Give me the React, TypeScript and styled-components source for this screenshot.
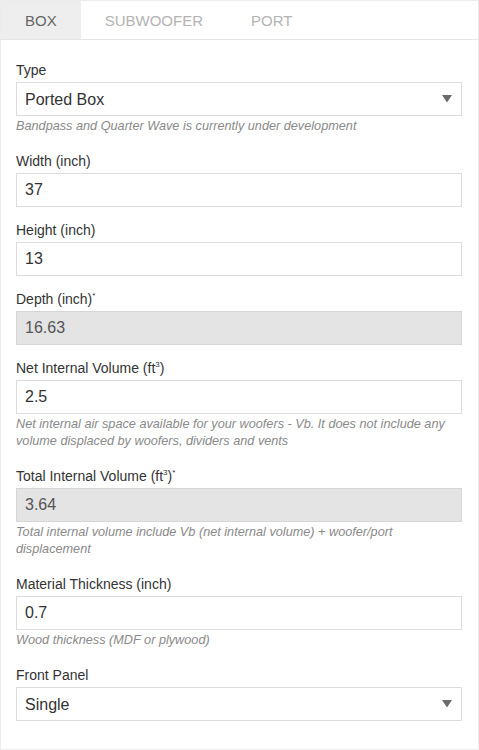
import React from "react";
import styled, { createGlobalStyle } from "styled-components";

const Global = createGlobalStyle`
  html, body { margin: 0; padding: 0; background: #ffffff; }
  body { font-family: "Liberation Sans", Arial, Helvetica, sans-serif; color: #333; }
  * { box-sizing: border-box; }
`;

const Card = styled.div`
  width: 479px;
  border: 1px solid #ececec;
  background: #fff;
`;

const TabBar = styled.div`
  display: flex;
  height: 39px;
  border-bottom: 1px solid #e6e6e6;
`;

const Tab = styled.div<{ $active?: boolean }>`
  display: flex;
  align-items: center;
  padding: 0 24px;
  font-size: 15px;
  color: ${(p) => (p.$active ? "#666666" : "#b3b3b3")};
  background: ${(p) => (p.$active ? "#eeeeee" : "transparent")};
`;

const Form = styled.div`
  display: flex;
  flex-direction: column;
  gap: 14px;
  padding: 21px 16px 28px 15px;
`;

const Group = styled.div`
  display: flex;
  flex-direction: column;
`;

const Label = styled.label`
  font-size: 14px;
  line-height: 18px;
  color: #333;
  margin-bottom: 3px;
`;

const Sup = styled.sup`
  font-size: 8px;
  line-height: 0;
  vertical-align: 6px;
`;

const Input = styled.input<{ $disabled?: boolean }>`
  width: 100%;
  height: 34px;
  margin: 0;
  padding: 0 8px;
  font-family: "Liberation Sans", Arial, Helvetica, sans-serif;
  font-size: 16px;
  color: ${(p) => (p.$disabled ? "#555" : "#333")};
  background: ${(p) => (p.$disabled ? "#e4e4e4" : "#fff")};
  border: 1px solid ${(p) => (p.$disabled ? "#d6d6d6" : "#dcdcdc")};
  border-radius: 0;
  outline: none;
`;

const SelectWrap = styled.div`
  position: relative;
  width: 100%;
`;

const Select = styled.select`
  width: 100%;
  height: 34px;
  margin: 0;
  padding: 0 30px 0 8px;
  font-family: "Liberation Sans", Arial, Helvetica, sans-serif;
  font-size: 16px;
  color: #333;
  background: #fff;
  border: 1px solid #dcdcdc;
  border-radius: 0;
  appearance: none;
  -webkit-appearance: none;
  outline: none;
`;

const Arrow = styled.svg`
  position: absolute;
  right: 10px;
  top: 13px;
  pointer-events: none;
`;

const Help = styled.div`
  margin: 2px 0 3px;
  font-size: 12.7px;
  line-height: 17px;
  font-style: italic;
  color: #8a8a8a;
`;

type FieldProps = {
  label: React.ReactNode;
  value: string;
  disabled?: boolean;
  help?: string;
};

const Field = ({ label, value, disabled, help }: FieldProps) => (
  <Group>
    <Label>{label}</Label>
    <Input defaultValue={value} readOnly={disabled} $disabled={disabled} />
    {help && <Help>{help}</Help>}
  </Group>
);

type SelectFieldProps = {
  label: string;
  options: string[];
  help?: string;
};

const SelectField = ({ label, options, help }: SelectFieldProps) => (
  <Group>
    <Label>{label}</Label>
    <SelectWrap>
      <Select defaultValue={options[0]}>
        {options.map((o) => (
          <option key={o}>{o}</option>
        ))}
      </Select>
      <Arrow width="10" height="8" viewBox="0 0 10 8">
        <polygon points="0,0 10,0 5,7.5" fill="#6b6b6b" />
      </Arrow>
    </SelectWrap>
    {help && <Help>{help}</Help>}
  </Group>
);

export default function App() {
  return (
    <>
      <Global />
      <Card>
        <TabBar>
          <Tab $active>BOX</Tab>
          <Tab>SUBWOOFER</Tab>
          <Tab>PORT</Tab>
        </TabBar>
        <Form>
          <SelectField
            label="Type"
            options={["Ported Box", "Sealed Box"]}
            help="Bandpass and Quarter Wave is currently under development"
          />
          <Field label="Width (inch)" value="37" />
          <Field label="Height (inch)" value="13" />
          <Field
            label={
              <>
                Depth (inch)<Sup>*</Sup>
              </>
            }
            value="16.63"
            disabled
          />
          <Field
            label={
              <>
                Net Internal Volume (ft<Sup>3</Sup>)
              </>
            }
            value="2.5"
            help="Net internal air space available for your woofers - Vb. It does not include any volume displaced by woofers, dividers and vents"
          />
          <Field
            label={
              <>
                Total Internal Volume (ft<Sup>3</Sup>)<Sup>*</Sup>
              </>
            }
            value="3.64"
            disabled
            help="Total internal volume include Vb (net internal volume) + woofer/port displacement"
          />
          <Field
            label="Material Thickness (inch)"
            value="0.7"
            help="Wood thickness (MDF or plywood)"
          />
          <SelectField label="Front Panel" options={["Single", "Double"]} />
        </Form>
      </Card>
    </>
  );
}
